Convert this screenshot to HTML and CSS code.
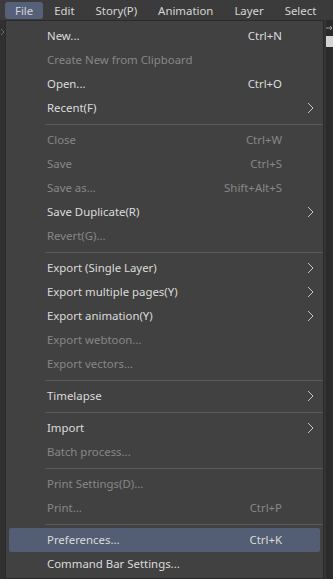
FILE: index.html
```html
<!DOCTYPE html>
<html lang="en">
<head>
    <meta charset="UTF-8">
    <meta name="viewport" content="width=device-width, initial-scale=1.0">
    <title>File menu</title>
    <link rel="stylesheet" href="styles.css">
</head>
<body>
    <div class="menubar">
        <div class="menubar-item active">File</div>
        <div class="menubar-item">Edit</div>
        <div class="menubar-item">Story(P)</div>
        <div class="menubar-item">Animation</div>
        <div class="menubar-item">Layer</div>
        <div class="menubar-item">Select</div>
    </div>

    <div class="workspace">
        <div class="side-strip">
            <svg width="5" height="10" viewBox="0 0 5 10"><polyline points="1,2 4,5 1,8" fill="none" stroke="#6a6a6a" stroke-width="1"/></svg>
        </div>

        <div class="menu">
            <div class="item"><span class="label">New...</span><span class="shortcut">Ctrl+N</span><span class="arrow"></span></div>
            <div class="item disabled"><span class="label">Create New from Clipboard</span><span class="shortcut"></span><span class="arrow"></span></div>
            <div class="item"><span class="label">Open...</span><span class="shortcut">Ctrl+O</span><span class="arrow"></span></div>
            <div class="item"><span class="label">Recent(F)</span><span class="shortcut"></span><span class="arrow"><svg width="7" height="12" viewBox="0 0 7 12"><polyline points="1,1 6,6 1,11" fill="none" stroke="#c4c4c4" stroke-width="1"/></svg></span></div>
            <div class="separator"></div>
            <div class="item disabled"><span class="label">Close</span><span class="shortcut">Ctrl+W</span><span class="arrow"></span></div>
            <div class="item disabled"><span class="label">Save</span><span class="shortcut">Ctrl+S</span><span class="arrow"></span></div>
            <div class="item disabled"><span class="label">Save as...</span><span class="shortcut">Shift+Alt+S</span><span class="arrow"></span></div>
            <div class="item"><span class="label">Save Duplicate(R)</span><span class="shortcut"></span><span class="arrow"><svg width="7" height="12" viewBox="0 0 7 12"><polyline points="1,1 6,6 1,11" fill="none" stroke="#c4c4c4" stroke-width="1"/></svg></span></div>
            <div class="item disabled"><span class="label">Revert(G)...</span><span class="shortcut"></span><span class="arrow"></span></div>
            <div class="separator"></div>
            <div class="item"><span class="label">Export (Single Layer)</span><span class="shortcut"></span><span class="arrow"><svg width="7" height="12" viewBox="0 0 7 12"><polyline points="1,1 6,6 1,11" fill="none" stroke="#c4c4c4" stroke-width="1"/></svg></span></div>
            <div class="item"><span class="label">Export multiple pages(Y)</span><span class="shortcut"></span><span class="arrow"><svg width="7" height="12" viewBox="0 0 7 12"><polyline points="1,1 6,6 1,11" fill="none" stroke="#c4c4c4" stroke-width="1"/></svg></span></div>
            <div class="item"><span class="label">Export animation(Y)</span><span class="shortcut"></span><span class="arrow"><svg width="7" height="12" viewBox="0 0 7 12"><polyline points="1,1 6,6 1,11" fill="none" stroke="#c4c4c4" stroke-width="1"/></svg></span></div>
            <div class="item disabled"><span class="label">Export webtoon...</span><span class="shortcut"></span><span class="arrow"></span></div>
            <div class="item disabled"><span class="label">Export vectors...</span><span class="shortcut"></span><span class="arrow"></span></div>
            <div class="separator"></div>
            <div class="item"><span class="label">Timelapse</span><span class="shortcut"></span><span class="arrow"><svg width="7" height="12" viewBox="0 0 7 12"><polyline points="1,1 6,6 1,11" fill="none" stroke="#c4c4c4" stroke-width="1"/></svg></span></div>
            <div class="separator"></div>
            <div class="item"><span class="label">Import</span><span class="shortcut"></span><span class="arrow"><svg width="7" height="12" viewBox="0 0 7 12"><polyline points="1,1 6,6 1,11" fill="none" stroke="#c4c4c4" stroke-width="1"/></svg></span></div>
            <div class="item disabled"><span class="label">Batch process...</span><span class="shortcut"></span><span class="arrow"></span></div>
            <div class="separator"></div>
            <div class="item disabled"><span class="label">Print Settings(D)...</span><span class="shortcut"></span><span class="arrow"></span></div>
            <div class="item disabled"><span class="label">Print...</span><span class="shortcut">Ctrl+P</span><span class="arrow"></span></div>
            <div class="separator"></div>
            <div class="item hover"><span class="label">Preferences...</span><span class="shortcut">Ctrl+K</span><span class="arrow"></span></div>
            <div class="item"><span class="label">Command Bar Settings...</span><span class="shortcut"></span><span class="arrow"></span></div>
        </div>

        <div class="right-strip">
            <svg class="pin" width="7" height="8" viewBox="0 0 7 8"><path d="M0 4 H6 M4 2 L6 4 L4 6" fill="none" stroke="#a0a0a0" stroke-width="1"/></svg>
            <div class="tab-block"></div>
        </div>
    </div>
</body>
</html>
```

FILE: styles.css
```css
body {
    margin: 0;
    background: #2d2d2d;
    font-family: "Noto Sans", "Open Sans", sans-serif;
    font-size: 11.4px;
    color: #dcdcdc;
    overflow: hidden;
}

.menubar {
    display: flex;
    align-items: center;
    height: 20px;
    padding-left: 5px;
    background: #3b3b3b;
}

.menubar-item {
    padding: 0 10px;
    height: 17px;
    line-height: 17px;
    margin-right: 1px;
    color: #d6d6d6;
    border-radius: 3px;
}

.menubar-item.active {
    background: #566079;
}

.workspace {
    display: flex;
    height: 559px;
}

.side-strip {
    width: 5px;
    background: #303030;
    padding-top: 7px;
}

.side-strip svg {
    display: block;
}

.menu {
    width: 319px;
    background: #414141;
    border: 1px solid #2a2a2a;
    padding: 3px 0;
}

.item {
    display: flex;
    align-items: center;
    box-sizing: border-box;
    height: 24px;
    margin: 0 3px;
    padding: 0 6px 1px 38px;
    border-radius: 2px;
}

.item .label {
    flex: 1;
}

.item .shortcut {
    text-align: right;
}

.item .arrow {
    width: 32px;
    display: flex;
    justify-content: flex-end;
}

.item .arrow svg {
    display: block;
}

.item.disabled {
    color: #878787;
}

.item.hover {
    background: #535d73;
}

.separator {
    height: 8px;
    margin-left: 39px;
    display: flex;
    align-items: center;
}

.separator::before {
    content: "";
    flex: 1;
    height: 1px;
    background: #5b5b5b;
}

.right-strip {
    flex: 1;
    background: #2b2b2b;
    border-left: 2px solid #353535;
    padding-top: 4px;
}

.pin {
    display: block;
}

.tab-block {
    margin-top: 4px;
    height: 11px;
    background: #d4d4d4;
}
```
